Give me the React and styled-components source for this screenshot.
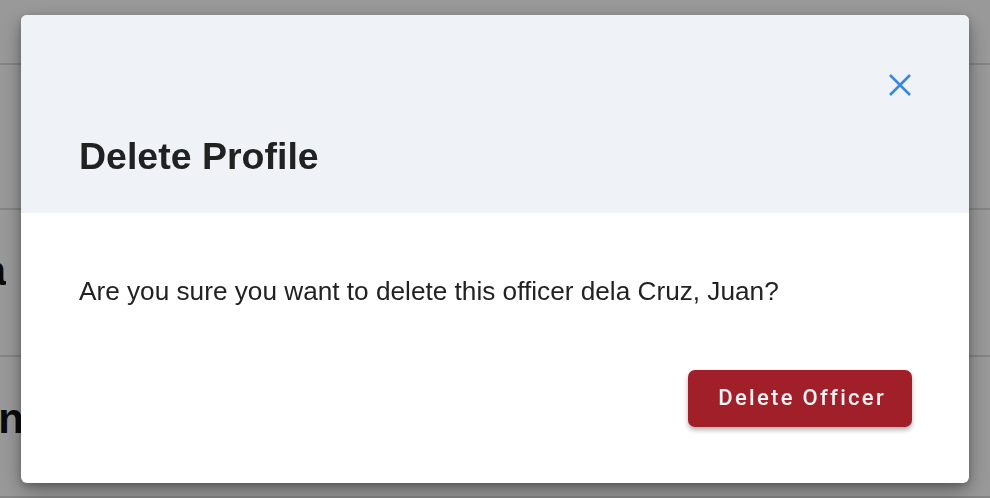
import React from 'react';
import styled, {createGlobalStyle} from 'styled-components';

const GlobalStyle = createGlobalStyle`
    html, body {
        margin: 0;
        padding: 0;
        height: 100%;
    }
    body {
        font-family: "Liberation Sans", Arial, sans-serif;
        color: #222;
        overflow: hidden;
    }
`

// 모달 뒤에 깔린 목록 화면
const Page = styled.div`
    height: 498px;
    background: #ffffff;
    display: flex;
    flex-direction: column;
`

const Row = styled.div`
    height: ${props => props.h}px;
    flex-shrink: 0;
    border-bottom: 2px solid #dcdcdc;
    box-sizing: border-box;
    display: flex;
    align-items: flex-start;
`

const RowLabel = styled.div`
    width: ${props => props.w}px;
    overflow: hidden;
    display: flex;
    justify-content: flex-end;
    white-space: nowrap;
    font-size: 42px;
    line-height: 48px;
    font-weight: bold;
    color: #111;
    margin-top: ${props => props.top || 0}px;
`

const Overlay = styled.div`
    position: fixed;
    inset: 0;
    background: rgba(0, 0, 0, 0.4);
    display: flex;
    justify-content: flex-start;
    align-items: flex-start;
    padding: 15px 0 0 21px;
`

const Dialog = styled.div`
    width: 948px;
    background: #ffffff;
    border-radius: 6px;
    overflow: hidden;
    box-shadow: 0 8px 20px rgba(0, 0, 0, 0.35), 0 2px 6px rgba(0, 0, 0, 0.2);
`

const Header = styled.div`
    background: #eff3f8;
    height: 198px;
    box-sizing: border-box;
    padding: 58px 58px 0 58px;
    display: flex;
    flex-direction: column;
`

const CloseButton = styled.button`
    align-self: flex-end;
    width: 24px;
    height: 24px;
    margin-right: -1px;
    padding: 0;
    border: none;
    background: transparent;
    cursor: pointer;
    display: flex;
`

const Title = styled.h2`
    margin: 37px 0 0 0;
    font-size: 37.5px;
    line-height: 44px;
    font-weight: bold;
    color: #212121;
`

const Body = styled.div`
    padding: 63px 57px 56px 58px;
    display: flex;
    flex-direction: column;
`

const Message = styled.p`
    margin: 0;
    font-size: 26.2px;
    line-height: 30px;
    color: #222;
`

const Footer = styled.div`
    display: flex;
    justify-content: flex-end;
    margin-top: 64px;
`

const DangerButton = styled.button`
    height: 57px;
    padding: 0 26px 2px 30px;
    border: none;
    border-radius: 7px;
    background: #a01f28;
    color: #f7f3f4;
    font-family: Roboto, "Liberation Sans", sans-serif;
    font-weight: 500;
    font-size: 22px;
    letter-spacing: 2.3px;
    box-shadow: 0 3px 5px rgba(0, 0, 0, 0.3);
    cursor: pointer;
`

const CloseIcon = () => (
    <svg width="24" height="24" viewBox="0 0 24 24" fill="none">
        <path d="M2 2 L22 22 M22 2 L2 22" stroke="#3b86e3" strokeWidth="2.6" strokeLinecap="butt"/>
    </svg>
)

const App = () => {
    return (
        <>
            <GlobalStyle/>
            <Page>
                <Row h={65}/>
                <Row h={145}/>
                <Row h={147}>
                    <RowLabel w={6} top={37}>Juana</RowLabel>
                </Row>
                <Row h={141}>
                    <RowLabel w={24} top={38}>Open</RowLabel>
                </Row>
            </Page>
            <Overlay>
                <Dialog role="dialog" aria-labelledby="delete-title">
                    <Header>
                        <CloseButton aria-label="Close">
                            <CloseIcon/>
                        </CloseButton>
                        <Title id="delete-title">Delete Profile</Title>
                    </Header>
                    <Body>
                        <Message>Are you sure you want to delete this officer dela Cruz, Juan?</Message>
                        <Footer>
                            <DangerButton type="button">Delete Officer</DangerButton>
                        </Footer>
                    </Body>
                </Dialog>
            </Overlay>
        </>
    )
}

export default App;
